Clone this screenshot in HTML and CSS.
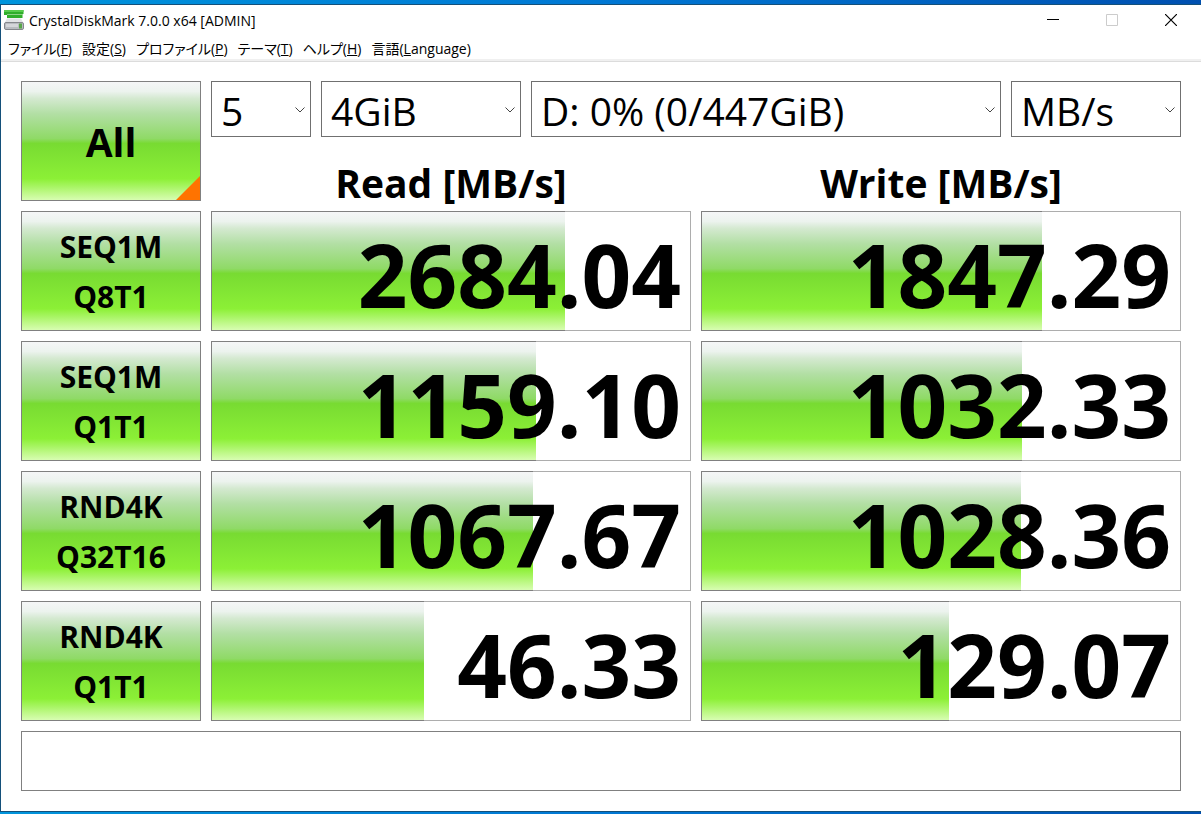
FILE: index.html
```html
<!DOCTYPE html>
<html lang="ja">
<head>
    <meta charset="UTF-8">
    <meta name="viewport" content="width=device-width, initial-scale=1.0">
    <title>CrystalDiskMark 7.0.0 x64 [ADMIN]</title>
    <link rel="stylesheet" href="styles.css">
</head>
<body>
    <div class="window">
        <header class="titlebar">
            <svg class="app-icon" width="20" height="20" viewBox="0 0 20 20" aria-hidden="true">
                <path d="M0 0h19.500v4h-1v4H3V5H0z" fill="#2fae2a"/>
                <path d="M0 0h19.500v2H0z" fill="#57cc4c"/>
                <path d="M3 4.200h16v.8H3z" fill="#a5dc9e"/>
                <path d="M3 8.500h14l2.500 4.500H.5z" fill="#e2e3e6"/>
                <rect x="0.500" y="12.500" width="19" height="7" rx="1.500" fill="#b9bbc0" stroke="#85878c"/>
                <path d="M2 14h12v3H2z" fill="#d5d6da"/>
                <path d="M15 13.500h3v5h-3z" fill="#58a548"/>
            </svg>
            <h1 class="title">CrystalDiskMark 7.0.0 x64 [ADMIN]</h1>
            <div class="window-buttons">
                <button type="button" aria-label="最小化">
                    <svg width="12" height="12" viewBox="0 0 12 12"><path d="M0 5.500h12" stroke="#000"/></svg>
                </button>
                <button type="button" aria-label="最大化" disabled>
                    <svg width="12" height="12" viewBox="0 0 12 12"><path d="M.5.5h11v11H.5z" fill="none" stroke="#ccc"/></svg>
                </button>
                <button type="button" aria-label="閉じる">
                    <svg width="12" height="12" viewBox="0 0 12 12"><path d="M0 0l12 12M12 0L0 12" stroke="#000" stroke-width="1.200"/></svg>
                </button>
            </div>
        </header>

        <nav class="menubar">
            <a href="#">ファイル(<u>F</u>)</a>
            <a href="#">設定(<u>S</u>)</a>
            <a href="#">プロファイル(<u>P</u>)</a>
            <a href="#">テーマ(<u>T</u>)</a>
            <a href="#">ヘルプ(<u>H</u>)</a>
            <a href="#">言語(<u>L</u>anguage)</a>
        </nav>

        <main class="panel">
            <button type="button" class="run run-all">All</button>
            <div class="controls">
                <div class="selects">
                    <div class="select count">
                        <select aria-label="テスト回数"><option>5</option></select>
                        <svg width="10" height="6" viewBox="0 0 10 6"><path d="M.5.5L5 5 9.500.5" fill="none" stroke="#444"/></svg>
                    </div>
                    <div class="select size">
                        <select aria-label="テストサイズ"><option>4GiB</option></select>
                        <svg width="10" height="6" viewBox="0 0 10 6"><path d="M.5.5L5 5 9.500.5" fill="none" stroke="#444"/></svg>
                    </div>
                    <div class="select drive">
                        <select aria-label="ドライブ"><option>D: 0% (0/447GiB)</option></select>
                        <svg width="10" height="6" viewBox="0 0 10 6"><path d="M.5.5L5 5 9.500.5" fill="none" stroke="#444"/></svg>
                    </div>
                    <div class="select unit">
                        <select aria-label="単位"><option>MB/s</option></select>
                        <svg width="10" height="6" viewBox="0 0 10 6"><path d="M.5.5L5 5 9.500.5" fill="none" stroke="#444"/></svg>
                    </div>
                </div>
                <div class="headings">
                    <h2>Read [MB/s]</h2>
                    <h2>Write [MB/s]</h2>
                </div>
            </div>

            <button type="button" class="run">SEQ1M<br>Q8T1</button>
            <div class="result"><div class="bar" style="width: 74%"></div><span>2684.04</span></div>
            <div class="result"><div class="bar" style="width: 71.4%"></div><span>1847.29</span></div>

            <button type="button" class="run">SEQ1M<br>Q1T1</button>
            <div class="result"><div class="bar" style="width: 68%"></div><span>1159.10</span></div>
            <div class="result"><div class="bar" style="width: 67.1%"></div><span>1032.33</span></div>

            <button type="button" class="run">RND4K<br>Q32T16</button>
            <div class="result"><div class="bar" style="width: 67.3%"></div><span>1067.67</span></div>
            <div class="result"><div class="bar" style="width: 66.9%"></div><span>1028.36</span></div>

            <button type="button" class="run">RND4K<br>Q1T1</button>
            <div class="result"><div class="bar" style="width: 44.5%"></div><span>46.33</span></div>
            <div class="result"><div class="bar" style="width: 51.8%"></div><span>129.07</span></div>

            <input type="text" class="comment" aria-label="コメント">
        </main>
    </div>
</body>
</html>
```
FILE: styles.css
```css
* {
    box-sizing: border-box;
}
body {
    margin: 0;
    padding: 4px 0 2px;
    font-family: "Open Sans", "Noto Sans CJK JP", sans-serif;
    color: #000;
    background: linear-gradient(to right, #0095dc, #0078d4 50%, #0050b0);
}
button, select, input {
    font-family: inherit;
    color: inherit;
}
.window {
    background-color: #fff;
    border: 1px solid #14507a;
    border-right: none;
}

.titlebar {
    display: flex;
    align-items: center;
    height: 30px;
    padding: 0 1px 0 3px;
}
.title {
    margin: 0 0 0 5px;
    font-size: 14px;
    font-weight: normal;
}
.window-buttons {
    display: flex;
    align-self: stretch;
    margin-left: auto;
}
.window-buttons button {
    display: flex;
    align-items: center;
    justify-content: center;
    width: 59px;
    padding: 0;
    border: none;
    background: none;
}

.menubar {
    display: flex;
    gap: 10px;
    height: 27px;
    padding-left: 7px;
    font-size: 14px;
    line-height: 27px;
    font-feature-settings: "palt";
    border-bottom: 1px solid #dcdcdc;
    box-shadow: inset 0 -2px #f0f0f0;
}
.menubar a {
    color: #000;
    text-decoration: none;
    white-space: nowrap;
}

.panel {
    display: grid;
    grid-template-columns: 180px 1fr 1fr;
    grid-template-rows: repeat(5, 120px) 60px;
    gap: 10px;
    padding: 19px 20px 20px;
}
.run, .bar {
    border: 1px solid #808080;
    background: linear-gradient(#f5f6f7, #ecf3ee 8%, #d4e9d0 14%, #b2dfa4 27%, #8fda66 48%, #78db32 52%, #8cf036 82%, #d8fdb2);
}
.run {
    padding: 2px 0 0;
    font-size: 30px;
    line-height: 50px;
    font-weight: bold;
}
.run-all {
    position: relative;
    font-size: 39px;
}
.run-all::after {
    content: '';
    position: absolute;
    right: 0;
    bottom: 0;
    width: 24px;
    height: 24px;
    background-color: #ff7300;
    clip-path: polygon(100% 0, 100% 100%, 0 100%);
}

.controls {
    grid-column: span 2;
}
.selects {
    display: flex;
    gap: 10px;
}
.select {
    position: relative;
    height: 56px;
}
.select select {
    appearance: none;
    width: 100%;
    height: 100%;
    padding: 2px 9px 0;
    border: 1px solid #707070;
    border-radius: 0;
    background-color: #fff;
    font-size: 39px;
}
.select svg {
    position: absolute;
    right: 6px;
    top: 26px;
    pointer-events: none;
}
.count {
    width: 100px;
}
.size {
    width: 200px;
}
.drive {
    flex: 1;
}
.unit {
    width: 170px;
}
.headings {
    display: grid;
    grid-template-columns: 1fr 1fr;
    gap: 10px;
    padding-top: 16px;
}
.headings h2 {
    margin: 0;
    font-size: 39px;
    line-height: 60px;
    text-align: center;
}

.result {
    position: relative;
    border: 1px solid #adadad;
    padding-right: 9px;
    font-size: 87px;
    line-height: 124px;
    font-weight: bold;
    text-align: right;
}
.result span {
    position: relative;
}
/* the bar covers the frame of the box with its own darker one */
.bar {
    position: absolute;
    top: -1px;
    bottom: -1px;
    left: -1px;
    border-right: none;
}

.comment {
    grid-column: 1 / -1;
    padding: 0 10px;
    border: 1px solid #808080;
    font-size: 30px;
}
```
